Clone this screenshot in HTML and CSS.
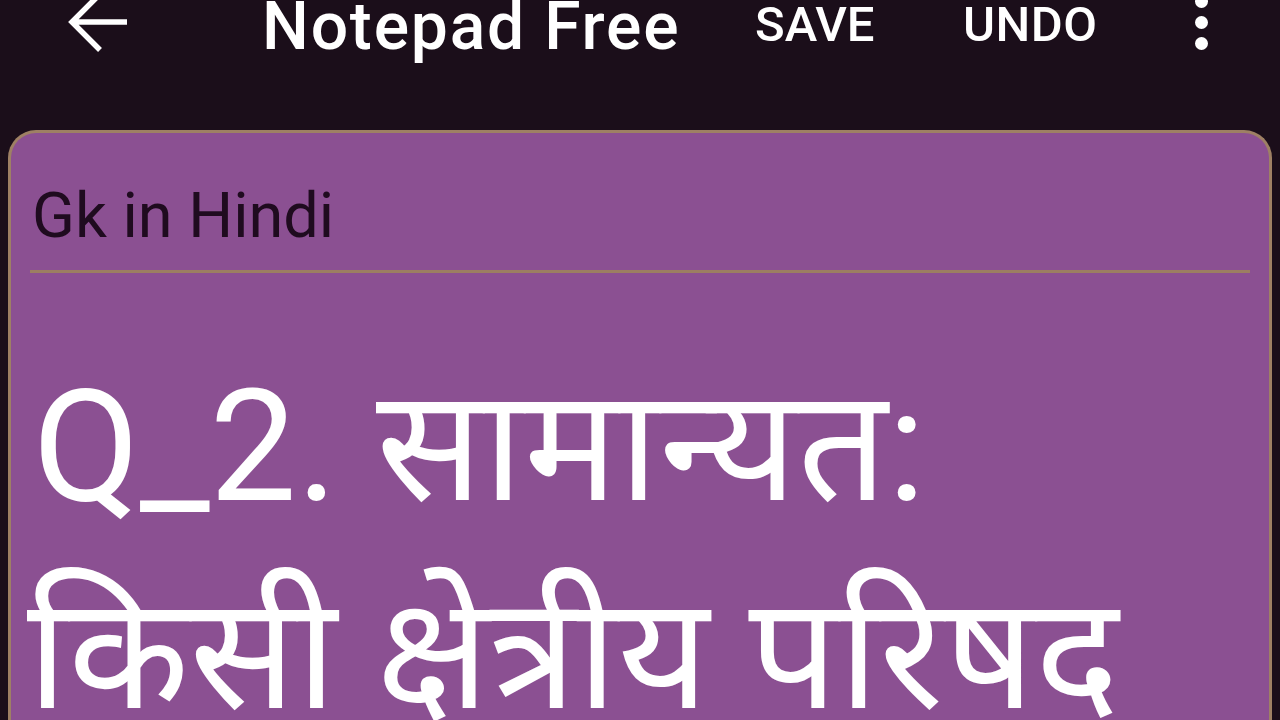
FILE: index.html
```html
<!DOCTYPE html>
<html lang="hi">
<head>
<meta charset="utf-8">
<title>Notepad Free</title>
<link rel="stylesheet" href="styles.css">
</head>
<body>
<div class="app">
  <header class="toolbar">
    <div class="back">
      <svg width="62" height="64" viewBox="0 0 62 64"><path d="M60 30H5M33 2L5 30l28 28" fill="none" stroke="#fff" stroke-width="5.5" stroke-linecap="butt" stroke-linejoin="miter"/></svg>
    </div>
    <div class="title">Notepad Free</div>
    <div class="action save">SAVE</div>
    <div class="action undo">UNDO</div>
    <div class="more">
      <span class="dot"></span><span class="dot"></span><span class="dot"></span>
    </div>
  </header>
  <main class="card">
    <div class="note-title">Gk in Hindi</div>
    <div class="divider"></div>
    <div class="note-body">
      <div class="line">Q_2. <span class="dev">सामान्यत:</span></div>
      <div class="line"><span class="dev">किसी क्षेत्रीय परिषद</span></div>
    </div>
  </main>
</div>
</body>
</html>
```
FILE: styles.css
```css
html, body {
  margin: 0;
  padding: 0;
  background: #1b0e1a;
  width: 1280px;
  height: 720px;
  overflow: hidden;
  font-family: Roboto, "Noto Sans", "Noto Sans Devanagari", sans-serif;
}
.app {
  display: flex;
  flex-direction: column;
  height: 720px;
  overflow: hidden;
}
.toolbar {
  height: 130px;
  display: flex;
  align-items: flex-start;
  color: #fff;
  flex-shrink: 0;
  overflow: hidden;
}
.back {
  margin-left: 67px;
  margin-top: -8px;
  width: 195px;
  flex-shrink: 0;
}
.back svg { display: block; }
.title {
  width: 493px;
  flex-shrink: 0;
  margin-top: -6px;
  font-size: 66px;
  font-weight: 500;
  line-height: 66px;
  letter-spacing: 1.8px;
  white-space: nowrap;
}
.action {
  font-size: 49px;
  font-weight: 500;
  line-height: 56px;
  margin-top: -3px;
  flex-shrink: 0;
  white-space: nowrap;
}
.save { width: 208px; }
.undo { width: 232px; letter-spacing: 0.5px; }
.more {
  display: flex;
  flex-direction: column;
  gap: 8px;
  margin-top: -5px;
}
.dot {
  width: 13px;
  height: 13px;
  border-radius: 50%;
  background: #fff;
}
.card {
  margin: 0 8px;
  flex: 1 0 auto;
  background: #8b5092;
  border: 3px solid #9e8064;
  border-bottom: none;
  border-radius: 28px 28px 0 0;
  padding: 0 19px;
}
.note-title {
  font-size: 63px;
  color: #1f0b1f;
  line-height: 76px;
  margin-top: 45px;
  padding-left: 2px;
}
.divider {
  height: 3px;
  background: #9c7e62;
  margin-top: 16px;
}
.note-body {
  color: #fff;
  font-size: 155px;
  line-height: 208px;
  margin-top: 70px;
  white-space: nowrap;
}
.line {
  height: 208px;
  padding-left: 3px;
}
.dev {
  font-size: 158px;
  line-height: 0;
}
.line:nth-child(2) { padding-left: 0; margin-left: -3px; }
```
